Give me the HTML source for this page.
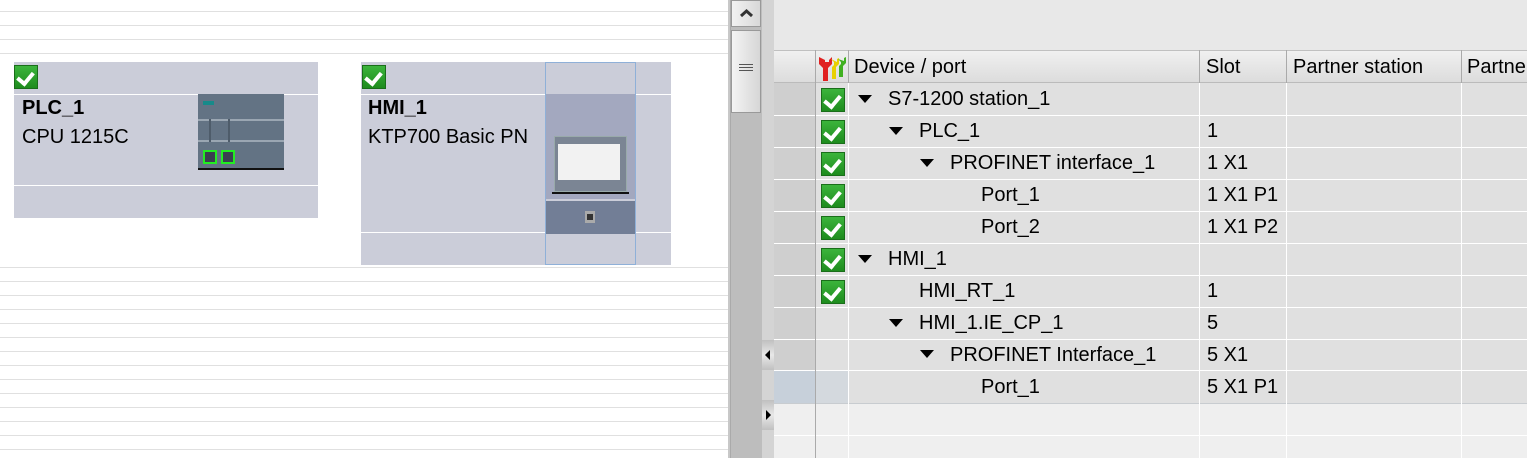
<!DOCTYPE html><html><head><style>
*{margin:0;padding:0;box-sizing:border-box}
body{width:1527px;height:458px;position:relative;overflow:hidden;background:#fff;font-family:"Liberation Sans",sans-serif;}
.a{position:absolute}
.hl{position:absolute;left:0;width:728px;height:1px;background:#e0e0e0}
.t{position:absolute;font-size:20px;color:#000;white-space:nowrap;line-height:32px}
.ck{position:absolute;width:24px;height:24px;background:linear-gradient(#3cb43c,#1e8c1e);border:1px solid #1a6e1a}
.ck:after{content:"";position:absolute;left:5px;top:3px;width:7px;height:12px;border:solid #fff;border-width:0 4px 4px 0;transform:rotate(40deg)}
.tri{position:absolute;width:0;height:0;border-left:7px solid transparent;border-right:7px solid transparent;border-top:8px solid #000}
</style></head><body>
<div class="hl" style="top:11px"></div><div class="hl" style="top:25px"></div><div class="hl" style="top:39px"></div><div class="hl" style="top:53px"></div>
<div class="hl" style="top:267px"></div><div class="hl" style="top:281px"></div><div class="hl" style="top:295px"></div><div class="hl" style="top:309px"></div><div class="hl" style="top:323px"></div><div class="hl" style="top:337px"></div><div class="hl" style="top:351px"></div><div class="hl" style="top:365px"></div><div class="hl" style="top:379px"></div><div class="hl" style="top:393px"></div><div class="hl" style="top:407px"></div><div class="hl" style="top:421px"></div><div class="hl" style="top:435px"></div><div class="hl" style="top:449px"></div>
<div class="a" style="left:14px;top:62px;width:304px;height:156px;background:#cbcdd9"></div>
<div class="a" style="left:14px;top:94px;width:304px;height:1px;background:#fff"></div>
<div class="a" style="left:14px;top:185px;width:304px;height:1px;background:#fff"></div>
<div class="ck" style="left:14px;top:65px"></div>
<div class="t" style="left:22px;top:92px;font-weight:bold">PLC_1</div>
<div class="t" style="left:22px;top:121px">CPU 1215C</div>
<div class="a" style="left:198px;top:94px;width:86px;height:76px;background:#637384">
 <div class="a" style="left:5px;top:7px;width:11px;height:4px;background:#178a8a"></div>
 <div class="a" style="left:0;top:25px;width:86px;height:2px;background:#9aa6b2"></div>
 <div class="a" style="left:0;top:46px;width:86px;height:2px;background:#9aa6b2"></div>
 <div class="a" style="left:11px;top:25px;width:2px;height:23px;background:#4e5c6a"></div>
 <div class="a" style="left:30px;top:25px;width:2px;height:23px;background:#4e5c6a"></div>
 <div class="a" style="left:5px;top:56px;width:14px;height:14px;border:2px solid #22ee22;background:#3a4050"></div>
 <div class="a" style="left:23px;top:56px;width:14px;height:14px;border:2px solid #22ee22;background:#3a4050"></div>
 <div class="a" style="left:0;top:74px;width:86px;height:2px;background:#111"></div>
</div>
<div class="a" style="left:361px;top:62px;width:310px;height:203px;background:#cbcdd9"></div>
<div class="a" style="left:361px;top:94px;width:310px;height:1px;background:#fff"></div>
<div class="a" style="left:361px;top:232px;width:310px;height:1px;background:#fff"></div>
<div class="ck" style="left:362px;top:65px"></div>
<div class="t" style="left:368px;top:92px;font-weight:bold">HMI_1</div>
<div class="t" style="left:368px;top:121px">KTP700 Basic PN</div>
<div class="a" style="left:545px;top:62px;width:91px;height:203px;border:1px solid #8fb0d8;background:#cbcdd9"></div>
<div class="a" style="left:546px;top:94px;width:89px;height:105px;background:#a3a8bf"></div>
<div class="a" style="left:554px;top:136px;width:73px;height:56px;background:#7b8594;border:1px solid #9aa"></div>
<div class="a" style="left:558px;top:144px;width:62px;height:36px;background:#f2f2f2"></div>
<div class="a" style="left:552px;top:192px;width:77px;height:2px;background:#111"></div>
<div class="a" style="left:546px;top:201px;width:89px;height:33px;background:#727e96"></div>
<div class="a" style="left:585px;top:211px;width:10px;height:12px;background:#aaa"><div class="a" style="left:2px;top:3px;width:6px;height:6px;background:#333"></div></div>
<div class="a" style="left:728px;top:0;width:46px;height:458px;background:#c8c8c8"></div>
<div class="a" style="left:730px;top:0;width:32px;height:458px;background:#bdbdbd;border-left:1px solid #aaa"></div>
<div class="a" style="left:731px;top:0;width:30px;height:27px;background:linear-gradient(90deg,#f2f2f2,#d8d8d8);border:1px solid #999"><svg class="a" style="left:7px;top:7px" width="15" height="10"><path d="M2 8L7.5 3L13 8" stroke="#333" stroke-width="3" fill="none"/></svg></div>
<div class="a" style="left:731px;top:30px;width:30px;height:83px;background:linear-gradient(90deg,#f4f4f4,#d6d6d6);border:1px solid #999"><div class="a" style="left:7px;top:33px;width:14px;height:7px;border-top:1px solid #555;border-bottom:1px solid #555"></div><div class="a" style="left:7px;top:36px;width:14px;height:1px;background:#555"></div></div>
<div class="a" style="left:762px;top:0;width:12px;height:458px;background:#d4d4d4"></div>
<div class="a" style="left:762px;top:340px;width:12px;height:30px;background:linear-gradient(#c0c0c0,#e8e8e8,#c0c0c0)"></div>
<div class="a" style="left:765px;top:350px;border-top:5px solid transparent;border-bottom:5px solid transparent;border-right:5px solid #000"></div>
<div class="a" style="left:762px;top:400px;width:12px;height:30px;background:linear-gradient(#c0c0c0,#e8e8e8,#c0c0c0)"></div>
<div class="a" style="left:766px;top:410px;border-top:5px solid transparent;border-bottom:5px solid transparent;border-left:5px solid #000"></div>
<div class="a" style="left:774px;top:0;width:753px;height:50px;background:#e8e8e8"></div>
<div class="a" style="left:774px;top:50px;width:753px;height:33px;background:linear-gradient(#f0f0f0,#dcdcdc);border-top:1px solid #c0c0c0;border-bottom:1px solid #bbb"></div>
<div class="a" style="left:815px;top:50px;width:1px;height:33px;background:#aaa"></div>
<div class="a" style="left:848px;top:50px;width:1px;height:33px;background:#aaa"></div>
<div class="a" style="left:1199px;top:50px;width:1px;height:33px;background:#aaa"></div>
<div class="a" style="left:1286px;top:50px;width:1px;height:33px;background:#aaa"></div>
<div class="a" style="left:1461px;top:50px;width:1px;height:33px;background:#aaa"></div>
<svg class="a" style="left:817px;top:54px" width="30" height="28" viewBox="0 0 30 28"><path d="M2 3v7l4 4v13h5V14l4-4V3l-3 3v2H8V6z" fill="#e02020"/><path d="M14 5l3 3v3l-2 2v12h4V13l3-3V4l-2 1v3z" fill="#e8d000"/><path d="M21 5l3 3v2l-2 2v11h4V12l3-3V3l-2 1v3z" fill="#40b020"/></svg>
<div class="t" style="left:854px;top:51px">Device / port</div>
<div class="t" style="left:1206px;top:51px">Slot</div>
<div class="t" style="left:1293px;top:51px">Partner station</div>
<div class="t" style="left:1467px;top:51px">Partne</div>
<div class="a" style="left:774px;top:83px;width:753px;height:375px;background:#efefef"></div>
<div class="a" style="left:774px;top:83px;width:41px;height:320px;background:#cfcfcf"></div>
<div class="a" style="left:815px;top:83px;width:712px;height:320px;background:#e0e0e0"></div>
<div class="a" style="left:774px;top:371px;width:41px;height:32px;background:#c7d0da"></div>
<div class="a" style="left:815px;top:371px;width:34px;height:32px;background:#d4d9de"></div>
<div class="a" style="left:774px;top:115px;width:753px;height:1px;background:#fff"></div>
<div class="a" style="left:774px;top:147px;width:753px;height:1px;background:#fff"></div>
<div class="a" style="left:774px;top:179px;width:753px;height:1px;background:#fff"></div>
<div class="a" style="left:774px;top:211px;width:753px;height:1px;background:#fff"></div>
<div class="a" style="left:774px;top:243px;width:753px;height:1px;background:#fff"></div>
<div class="a" style="left:774px;top:275px;width:753px;height:1px;background:#fff"></div>
<div class="a" style="left:774px;top:307px;width:753px;height:1px;background:#fff"></div>
<div class="a" style="left:774px;top:339px;width:753px;height:1px;background:#fff"></div>
<div class="a" style="left:774px;top:370px;width:753px;height:1px;background:#fff"></div>
<div class="a" style="left:774px;top:403px;width:753px;height:1px;background:#c8ccd0"></div>
<div class="a" style="left:774px;top:435px;width:753px;height:1px;background:#fff"></div>
<div class="a" style="left:815px;top:83px;width:1px;height:375px;background:#aaa"></div>
<div class="a" style="left:848px;top:83px;width:1px;height:375px;background:#fff"></div>
<div class="a" style="left:1199px;top:83px;width:1px;height:375px;background:#fff"></div>
<div class="a" style="left:1286px;top:83px;width:1px;height:375px;background:#fff"></div>
<div class="a" style="left:1461px;top:83px;width:1px;height:375px;background:#fff"></div>
<div class="ck" style="left:821px;top:88px"></div>
<div class="ck" style="left:821px;top:120px"></div>
<div class="ck" style="left:821px;top:152px"></div>
<div class="ck" style="left:821px;top:184px"></div>
<div class="ck" style="left:821px;top:216px"></div>
<div class="ck" style="left:821px;top:248px"></div>
<div class="ck" style="left:821px;top:280px"></div>
<div class="tri" style="left:858px;top:95px"></div><div class="t" style="left:888px;top:83px">S7-1200 station_1</div>
<div class="tri" style="left:889px;top:127px"></div><div class="t" style="left:919px;top:115px">PLC_1</div><div class="t" style="left:1207px;top:115px">1</div>
<div class="tri" style="left:920px;top:159px"></div><div class="t" style="left:950px;top:147px">PROFINET interface_1</div><div class="t" style="left:1207px;top:147px">1 X1</div>
<div class="t" style="left:981px;top:179px">Port_1</div><div class="t" style="left:1207px;top:179px">1 X1 P1</div>
<div class="t" style="left:981px;top:211px">Port_2</div><div class="t" style="left:1207px;top:211px">1 X1 P2</div>
<div class="tri" style="left:858px;top:255px"></div><div class="t" style="left:888px;top:243px">HMI_1</div>
<div class="t" style="left:919px;top:275px">HMI_RT_1</div><div class="t" style="left:1207px;top:275px">1</div>
<div class="tri" style="left:889px;top:319px"></div><div class="t" style="left:919px;top:307px">HMI_1.IE_CP_1</div><div class="t" style="left:1207px;top:307px">5</div>
<div class="tri" style="left:920px;top:350px"></div><div class="t" style="left:950px;top:339px">PROFINET Interface_1</div><div class="t" style="left:1207px;top:339px">5 X1</div>
<div class="t" style="left:981px;top:371px">Port_1</div><div class="t" style="left:1207px;top:371px">5 X1 P1</div>
</body></html>
